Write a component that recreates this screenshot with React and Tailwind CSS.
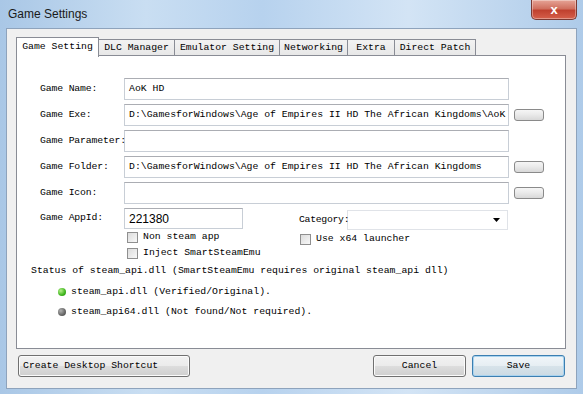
import React from "react";

const mono = { fontFamily: '"Liberation Mono", "DejaVu Sans Mono", monospace' };

function Tab({ label, w, active }) {
  if (active) {
    return (
      <div
        className="relative z-10 flex h-[20px] items-center justify-center border border-b-0 border-[#898c95] bg-white text-[9.8px] text-black"
        style={{ width: w, ...mono }}
      >
        {label}
      </div>
    );
  }
  return (
    <div
      className="-ml-px mt-[2px] flex h-[18px] items-center justify-center border border-b-0 border-[#898c95] bg-[linear-gradient(#f2f2f2,#e6e6e6)] text-[9.8px] text-black"
      style={{ width: w + 1, ...mono }}
    >
      {label}
    </div>
  );
}

function Input({ value, w = 385 }) {
  return (
    <div
      className="flex h-[22px] items-center border border-[#c8ced6] border-t-[#abadb3] bg-white pl-[4px] text-black"
      style={{ width: w }}
    >
      <span className="whitespace-nowrap text-[9.8px]" style={mono}>
        {value}
      </span>
    </div>
  );
}

function Browse() {
  return (
    <div className="ml-[5px] h-[12px] w-[30px] rounded-[3px] border border-[#8a8a8a] bg-[linear-gradient(#f6f6f6,#e9e9e9_50%,#d8d8d8)]" />
  );
}

function Label({ children }) {
  return (
    <div className="relative z-10 w-[84px] whitespace-nowrap text-[9.8px] tracking-[-0.15px] text-black" style={mono}>
      {children}
    </div>
  );
}

function Check({ label }) {
  return (
    <div className="flex h-[16px] items-center gap-[5px]">
      <div className="h-[11px] w-[11px] border border-[#8f8f8f] bg-[linear-gradient(135deg,#dcdcdc,#f8f8f8)]" />
      <span className="text-[9.8px] text-black" style={mono}>
        {label}
      </span>
    </div>
  );
}

function Btn({ children, w, primary }) {
  return (
    <div
      className={
        "flex h-[22px] items-center rounded-[3px] border text-[9.8px] text-black " +
        (primary
          ? "justify-center border-[#3c7fb1] bg-[linear-gradient(#f1f6f9,#e6eef3_50%,#d7e3ea_51%,#cbdae3)] shadow-[inset_0_0_0_1px_#a9d3ef]"
          : "border-[#707070] bg-[linear-gradient(#f2f2f2,#ebebeb_50%,#dddddd_51%,#cfcfcf)] shadow-[inset_0_0_0_1px_#fbfbfb]")
      }
      style={{ width: w, ...mono }}
    >
      {children}
    </div>
  );
}

export default function App() {
  return (
    <div className="relative h-[394px] w-[583px] overflow-hidden bg-[linear-gradient(90deg,#a9c7e6,#c9def2_25%,#b7d2ee_45%,#d3e4f5_70%,#aecbe9)]">
      {/* title bar */}
      <div className="flex h-[28px] items-center pl-[8px]">
        <span
          className="text-[12px] text-[#1a1a1a]"
          style={{ fontFamily: '"Liberation Sans", Arial, sans-serif' }}
        >
          Game Settings
        </span>
      </div>
      {/* close button */}
      <div className="absolute right-[6px] top-0 flex h-[20px] w-[46px] items-center justify-center rounded-b-[5px] border border-t-0 border-[#7b3a33] bg-[linear-gradient(#e6a497,#d0705f_45%,#c0412f_55%,#d6604b)] shadow-[inset_0_0_0_1px_rgba(255,255,255,0.35)]">
        <span
          className="text-[13px] font-bold leading-none text-white"
          style={{ fontFamily: '"Liberation Sans", Arial, sans-serif' }}
        >
          x
        </span>
      </div>

      {/* client area */}
      <div className="mx-[6px] flex h-[361px] flex-col border border-[#8ea3bc] bg-[#f0f0f0] px-[9px] pt-[8px]">
        {/* tabs */}
        <div className="flex h-[19px] items-start">
          <Tab label="Game Setting" w={83} active />
          <Tab label="DLC Manager" w={76} />
          <Tab label="Emulator Setting" w={105} />
          <Tab label="Networking" w={68} />
          <Tab label="Extra" w={47} />
          <Tab label="Direct Patch" w={81} />
        </div>
        {/* panel */}
        <div className="relative -mt-px flex h-[294px] w-[550px] flex-col border border-[#898c95] bg-white pt-[22px]">
          <div className="flex flex-col gap-[4px] pl-[23px]">
            <div className="flex items-center">
              <Label>Game Name:</Label>
              <Input value="AoK HD" />
            </div>
            <div className="flex items-center">
              <Label>Game Exe:</Label>
              <Input value="D:\GamesforWindows\Age of Empires II HD The African Kingdoms\AoK" />
              <Browse />
            </div>
            <div className="flex items-center">
              <Label>Game Parameter:</Label>
              <Input value="" />
            </div>
            <div className="flex items-center">
              <Label>Game Folder:</Label>
              <Input value="D:\GamesforWindows\Age of Empires II HD The African Kingdoms" />
              <Browse />
            </div>
            <div className="flex items-center">
              <Label>Game Icon:</Label>
              <Input value="" />
              <Browse />
            </div>
            <div className="flex items-start">
              <div className="flex h-[21px] items-center">
                <Label>Game AppId:</Label>
              </div>
              <div className="flex w-[175px] flex-col">
                <div className="flex h-[21px] w-[119px] items-center border border-[#c8ced6] border-t-[#abadb3] bg-white pl-[4px]">
                  <span
                    className="text-[12px] text-black"
                    style={{ fontFamily: '"Liberation Sans", Arial, sans-serif' }}
                  >
                    221380
                  </span>
                </div>
                <div className="pl-[3px]">
                  <Check label="Non steam app" />
                  <Check label="Inject SmartSteamEmu" />
                </div>
              </div>
              <div className="flex flex-col pt-[2px]">
                <div className="flex h-[20px] items-center">
                  <span className="relative z-10 w-[48px] whitespace-nowrap text-[9.8px] tracking-[-0.3px] text-black" style={mono}>
                    Category:
                  </span>
                  <div className="flex h-[20px] w-[161px] items-center justify-end border border-[#e0e3e8] bg-white pr-[7px]">
                    <svg width="7" height="4" viewBox="0 0 7 4">
                      <path d="M0 0h7L3.5 4z" fill="#000" />
                    </svg>
                  </div>
                </div>
                <div className="pl-[1px] pt-[1px]">
                  <Check label="Use x64 launcher" />
                </div>
              </div>
            </div>
          </div>

          <div className="mt-[3px] flex h-[14px] items-center pl-[14px]">
            <span className="text-[9.8px] text-black" style={mono}>
              Status of steam_api.dll (SmartSteamEmu requires original steam_api dll)
            </span>
          </div>
          <div className="mt-[7px] flex h-[14px] items-center gap-[5px] pl-[41px]">
            <div className="h-[8px] w-[8px] rounded-full bg-[radial-gradient(circle_at_35%_35%,#b6f08a,#3fb51e_60%,#238a10)]" />
            <span className="text-[9.8px] text-black" style={mono}>
              steam_api.dll (Verified/Original).
            </span>
          </div>
          <div className="mt-[6px] flex h-[14px] items-center gap-[5px] pl-[41px]">
            <div className="h-[8px] w-[8px] rounded-full bg-[radial-gradient(circle_at_35%_35%,#b0b0b0,#666_60%,#444)]" />
            <span className="text-[9.8px] text-black" style={mono}>
              steam_api64.dll (Not found/Not required).
            </span>
          </div>
        </div>

        {/* bottom buttons */}
        <div className="mt-[6px] flex items-center pl-[2px]">
          <Btn w={172}>
            <span className="pl-[4px]">Create Desktop Shortcut</span>
          </Btn>
          <div className="flex-1" />
          <div className="flex gap-[6px] pr-[2px]">
            <Btn w={93}>
              <span className="w-full text-center">Cancel</span>
            </Btn>
            <Btn w={93} primary>
              Save
            </Btn>
          </div>
        </div>
      </div>
    </div>
  );
}
